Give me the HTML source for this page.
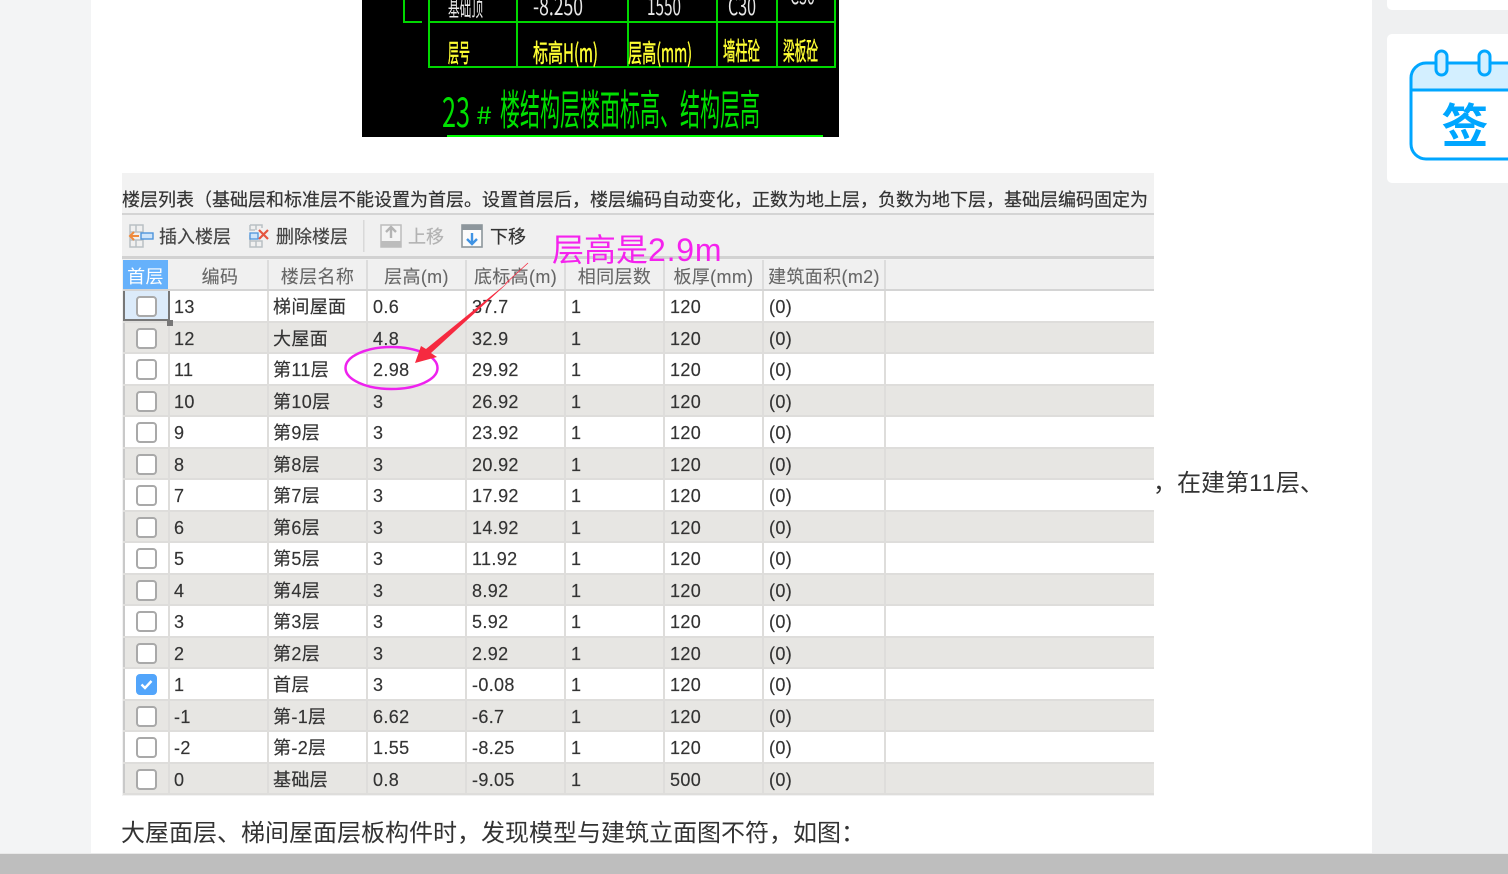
<!DOCTYPE html>
<html lang="zh">
<head>
<meta charset="utf-8">
<title>楼层列表</title>
<style>
html,body{margin:0;padding:0;width:1508px;height:874px;overflow:hidden;background:#f3f4f5;font-family:"Liberation Sans","Noto Sans CJK SC",sans-serif;color:#333}
.abs{position:absolute}
#main{left:91px;top:0;width:1281px;height:874px;background:#fff}
#side{left:1372px;top:0;width:136px;height:874px;background:#eff0f1}
.card{left:1387px;width:121px;background:#fff;border-radius:5px 0 0 5px}
#bar{left:0;top:853px;width:1508px;height:21px;box-sizing:border-box;border-top:1px solid #e9e9e9;background:#bebebe}
#shot{left:122px;top:173px;width:1032px;height:623px;background:#f2f2f2;overflow:hidden}
#title{left:0;top:14px;font-size:18px;line-height:26px;white-space:nowrap;color:#333;-webkit-text-stroke:.2px #333}
#tool{left:0;top:40px;width:1032px;height:46px;background:#f0f0f0;border-top:2px solid #d4d4d4;border-bottom:3px solid #d2d2d2;box-sizing:border-box}
.t{position:absolute;top:51px;font-size:18px;line-height:26px;white-space:nowrap;color:#444;-webkit-text-stroke:.2px currentColor}
#tbl{left:1px;top:87px;width:1031px;font-size:18px;color:#333}
.r{display:flex;height:31.5px;box-sizing:border-box;background:#fff;border-bottom:2px solid #dedddb}
.r.a{background:#e7e6e3}
.r span{display:block;box-sizing:border-box;border-right:2px solid #dedddb;padding-left:5px;line-height:33px;letter-spacing:.35px;white-space:nowrap;flex:none;width:99px;-webkit-text-stroke:.15px #333}
.r span:nth-child(1){width:47px;padding:0;position:relative;border-right:2px solid #dedddb;border-left:2px solid #c9c9c9}
.r span:nth-child(2){width:99px;padding-left:4px}
.r span:nth-child(3){padding-left:4px}
.r span:nth-child(8){width:122px}
.r span:last-child{width:268px;border-right:0}
.r i{position:absolute;left:11px;top:5px;width:21px;height:21px;box-sizing:border-box;border:2px solid #a9a9a9;border-radius:4px;background:#fff}
.h{height:31px;background:#f0f0f0;border-bottom:2px solid #d4d4d4;color:#666}
.h span{text-align:center;padding:0!important;line-height:35px;border-right:2px solid #dcdcdc;-webkit-text-stroke:.1px #666}
.h span:nth-child(1){background:#66b1fb;color:#fff;border:0;width:45px;-webkit-text-stroke:0}
.h span:nth-child(2){width:101px;text-indent:5px}
.r.s span:nth-child(1){background:#dcebfa;border:2px solid #777;border-top:0}
.r.c i{background:#52a5fb;border-color:#52a5fb}
.p{position:absolute;font-size:24px;line-height:34px;white-space:nowrap;color:#333}
.p b{font-weight:400;letter-spacing:1px}
svg{position:absolute;overflow:visible}
</style>
</head>
<body>
<div class="abs" id="main"></div>
<div class="abs" id="side"></div>
<div class="abs card" style="top:-10px;height:20px"></div>
<div class="abs card" style="top:34px;height:149px"></div>

<svg style="left:1400px;top:45px" width="108" height="120" viewBox="0 0 108 120">
  <path d="M108 18H26a14 14 0 0 0-14 14v13h96z" fill="#d3efff"/>
  <path d="M108 114H26a15 15 0 0 1-15-15V33a15 15 0 0 1 15-15h82M11 45h97" fill="none" stroke="#00a6ff" stroke-width="3"/>
  <rect x="36" y="6" width="11" height="24" rx="5.5" fill="#d3efff" stroke="#00a6ff" stroke-width="3"/>
  <rect x="79" y="6" width="11" height="24" rx="5.5" fill="#d3efff" stroke="#00a6ff" stroke-width="3"/>
  <text x="65" y="98" text-anchor="middle" font-size="47" font-weight="700" fill="#00a6ff" font-family="'Noto Sans CJK SC',sans-serif">签</text>
</svg>

<svg style="left:362px;top:0" width="477" height="137" viewBox="362 0 477 137">
  <rect x="362" y="0" width="477" height="137" fill="#000"/>
  <g stroke="#00d800" stroke-width="2" fill="none">
    <path d="M404 0V22H422M429 0V67H835V0M429 22H835M517 0V67M628 0V67M717 0V67M777 0V67"/>
  </g>
  <path d="M447 136H823" stroke="#00ff00" stroke-width="2"/>
  <g font-family="'Noto Sans CJK SC',sans-serif" font-size="25" fill="#ffff33" stroke="#ffff33" stroke-width=".5">
    <text x="448" y="62" textLength="22" lengthAdjust="spacingAndGlyphs">层号</text>
    <text x="533" y="62" textLength="65" lengthAdjust="spacingAndGlyphs">标高H(m)</text>
    <text x="628" y="62" textLength="64" lengthAdjust="spacingAndGlyphs">层高(mm)</text>
    <text x="723" y="60" textLength="37" lengthAdjust="spacingAndGlyphs">墙柱砼</text>
    <text x="783" y="60" textLength="35" lengthAdjust="spacingAndGlyphs">梁板砼</text>
  </g>
  <g font-family="'Noto Sans CJK SC',sans-serif" font-size="24" fill="#e8e8e8">
    <text x="448" y="16" textLength="35" lengthAdjust="spacingAndGlyphs">基础顶</text>
    <text x="533" y="15" textLength="50" lengthAdjust="spacingAndGlyphs">-8.250</text>
    <text x="647" y="15" textLength="34" lengthAdjust="spacingAndGlyphs">1550</text>
    <text x="728" y="15" textLength="28" lengthAdjust="spacingAndGlyphs">C30</text>
    <text x="790" y="4" textLength="25" lengthAdjust="spacingAndGlyphs">C30</text>
  </g>
  <g font-family="'Noto Sans CJK SC',sans-serif" fill="#00e000">
    <text x="442" y="127" font-size="40" textLength="28" lengthAdjust="spacingAndGlyphs">23</text>
    <text x="476" y="124" font-size="24" textLength="16" lengthAdjust="spacingAndGlyphs">#</text>
    <text x="500" y="125" font-size="42" textLength="260" lengthAdjust="spacingAndGlyphs">楼结构层楼面标高、结构层高</text>
  </g>
</svg>

<div class="abs" id="shot">
  <div class="abs" id="title">楼层列表（基础层和标准层不能设置为首层。设置首层后，楼层编码自动变化，正数为地上层，负数为地下层，基础层编码固定为</div>
  <div class="abs" id="tool"></div>
  <svg style="left:0;top:40px" width="500" height="46" viewBox="122 213 500 46">
    <g fill="none" stroke="#b9c0c4" stroke-width="1.5">
      <path d="M130 225h13v7h-13zM136 225v7M130 240h13v7h-13zM136 240v7M130 247h13M130 232v8M143 232v2M143 238v2"/>
      <path d="M250 225h12v3M250 225v5h5M256 225v5M250 241h12v6h-12zM256 241v6M250 235v6"/>
    </g>
    <path d="M139 236h-8M134 232l-4 4 4 4" fill="none" stroke="#ef8a3c" stroke-width="2"/>
    <rect x="141" y="233" width="12" height="6" fill="#cfe5fa" stroke="#4d94dc" stroke-width="1.4"/>
    <rect x="250" y="233" width="8" height="6" fill="#cfe5fa" stroke="#4d94dc" stroke-width="1.3"/>
    <path d="M259 230l9 9M268 230l-9 9" stroke="#e5553f" stroke-width="2.2"/>
    <rect x="363" y="220" width="1.5" height="32" fill="#d9d9d9"/>
    <rect x="381" y="225" width="20" height="22" fill="#f4f4f4" stroke="#bcbcbc" stroke-width="1.5"/>
    <rect x="381" y="241" width="20" height="6" fill="#bcbcbc"/>
    <path d="M391 238v-10M386 232l5-5 5 5" fill="none" stroke="#b4b4b4" stroke-width="2.4"/>
    <rect x="462" y="225" width="20" height="22" fill="#fbfbfb" stroke="#8d969c" stroke-width="1.6"/>
    <rect x="462" y="225" width="20" height="5" fill="#8d969c"/>
    <path d="M472 233v11M467 239l5 5 5-5" fill="none" stroke="#3f93e4" stroke-width="2.4"/>
  </svg>
  <div class="t" style="left:37px">插入楼层</div>
  <div class="t" style="left:154px">删除楼层</div>
  <div class="t" style="left:286px;color:#b2b2b2">上移</div>
  <div class="t" style="left:368px;color:#333">下移</div>

  <div class="abs" id="tbl">
    <div class="r h"><span>首层</span><span>编码</span><span>楼层名称</span><span>层高(m)</span><span>底标高(m)</span><span>相同层数</span><span>板厚(mm)</span><span>建筑面积(m2)</span><span></span></div>
    <div class="r s"><span><i></i></span><span>13</span><span>梯间屋面</span><span>0.6</span><span>37.7</span><span>1</span><span>120</span><span>(0)</span><span></span></div>
    <div class="r a"><span><i></i></span><span>12</span><span>大屋面</span><span>4.8</span><span>32.9</span><span>1</span><span>120</span><span>(0)</span><span></span></div>
    <div class="r"><span><i></i></span><span>11</span><span>第11层</span><span>2.98</span><span>29.92</span><span>1</span><span>120</span><span>(0)</span><span></span></div>
    <div class="r a"><span><i></i></span><span>10</span><span>第10层</span><span>3</span><span>26.92</span><span>1</span><span>120</span><span>(0)</span><span></span></div>
    <div class="r"><span><i></i></span><span>9</span><span>第9层</span><span>3</span><span>23.92</span><span>1</span><span>120</span><span>(0)</span><span></span></div>
    <div class="r a"><span><i></i></span><span>8</span><span>第8层</span><span>3</span><span>20.92</span><span>1</span><span>120</span><span>(0)</span><span></span></div>
    <div class="r"><span><i></i></span><span>7</span><span>第7层</span><span>3</span><span>17.92</span><span>1</span><span>120</span><span>(0)</span><span></span></div>
    <div class="r a"><span><i></i></span><span>6</span><span>第6层</span><span>3</span><span>14.92</span><span>1</span><span>120</span><span>(0)</span><span></span></div>
    <div class="r"><span><i></i></span><span>5</span><span>第5层</span><span>3</span><span>11.92</span><span>1</span><span>120</span><span>(0)</span><span></span></div>
    <div class="r a"><span><i></i></span><span>4</span><span>第4层</span><span>3</span><span>8.92</span><span>1</span><span>120</span><span>(0)</span><span></span></div>
    <div class="r"><span><i></i></span><span>3</span><span>第3层</span><span>3</span><span>5.92</span><span>1</span><span>120</span><span>(0)</span><span></span></div>
    <div class="r a"><span><i></i></span><span>2</span><span>第2层</span><span>3</span><span>2.92</span><span>1</span><span>120</span><span>(0)</span><span></span></div>
    <div class="r c"><span><i><svg width="17" height="17" viewBox="0 0 17 17" style="left:0;top:0"><path d="M3.5 8.5l3.5 3.5 6.5-7" fill="none" stroke="#fff" stroke-width="2.4"/></svg></i></span><span>1</span><span>首层</span><span>3</span><span>-0.08</span><span>1</span><span>120</span><span>(0)</span><span></span></div>
    <div class="r a"><span><i></i></span><span>-1</span><span>第-1层</span><span>6.62</span><span>-6.7</span><span>1</span><span>120</span><span>(0)</span><span></span></div>
    <div class="r"><span><i></i></span><span>-2</span><span>第-2层</span><span>1.55</span><span>-8.25</span><span>1</span><span>120</span><span>(0)</span><span></span></div>
    <div class="r a"><span><i></i></span><span>0</span><span>基础层</span><span>0.8</span><span>-9.05</span><span>1</span><span>500</span><span>(0)</span><span></span></div>
  </div>
</div>

<div class="abs" style="left:167px;top:320px;width:6px;height:6px;background:#777"></div>

<svg style="left:0;top:0" width="1508" height="874" viewBox="0 0 1508 874">
  <ellipse cx="391.5" cy="368" rx="46" ry="21" fill="none" stroke="#ee22ee" stroke-width="2.5"/>
  <path d="M528 263L505 284" stroke="#f62a40" stroke-width=".8"/>
  <polygon points="512,279 431,353 437,357 415,363 421,346 426,349" fill="#f62a40"/>
  <text x="552" y="261" font-size="32" fill="#f522ee" font-family="'Liberation Sans','Noto Sans CJK SC',sans-serif">层高是<tspan letter-spacing=".8">2.9m</tspan></text>
</svg>

<div class="p" style="left:1153px;top:467px">，在建第<b>11</b>层、</div>
<div class="p" style="left:121px;top:817px">大屋面层、梯间屋面层板构件时，发现模型与建筑立面图不符，如图：</div>

<div class="abs" id="bar"></div>
</body>
</html>
